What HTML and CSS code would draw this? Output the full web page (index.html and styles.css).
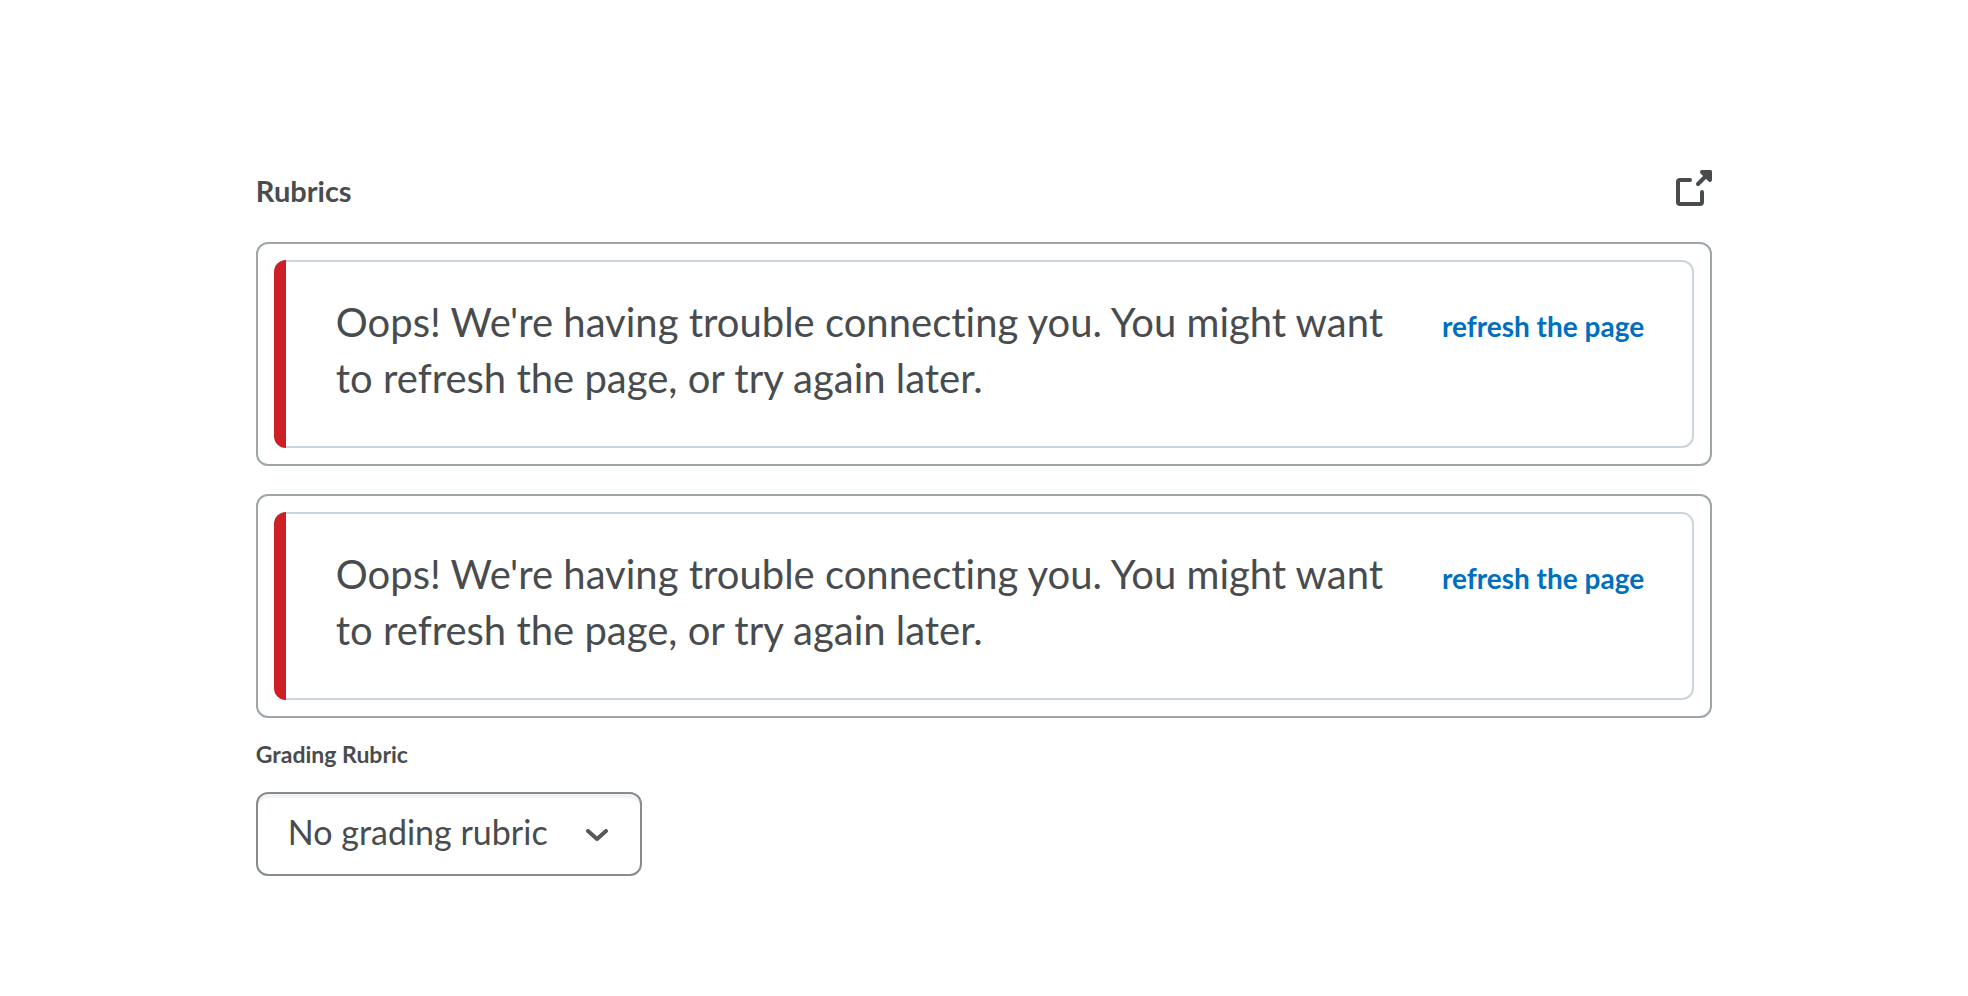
FILE: index.html
```html
<!DOCTYPE html>
<html lang="en">
<head>
<meta charset="utf-8">
<title>Rubrics</title>
<link rel="stylesheet" href="styles.css">
</head>
<body>
<main class="page">
  <header class="header">
    <h2 class="title">Rubrics</h2>
    <button class="popout" type="button" aria-label="Open in new window">
      <svg viewBox="0 0 36 36" width="36" height="36" aria-hidden="true">
        <path d="M14 10H4a2 2 0 0 0-2 2v20a2 2 0 0 0 2 2h20a2 2 0 0 0 2-2V22" fill="none" stroke="currentColor" stroke-width="4" stroke-linecap="round"/>
        <path d="M22 14l8-8" fill="none" stroke="currentColor" stroke-width="4" stroke-linecap="round"/>
        <path d="M26 0h8.500a1.500 1.500 0 0 1 1.500 1.500V10a2 2 0 0 1-3.400 1.400l-8-8A2 2 0 0 1 26 0z" fill="currentColor"/>
      </svg>
    </button>
  </header>
  <section class="rubric">
    <div class="alert" role="alert">
      <p class="message">Oops! We're having trouble connecting you. You might want to refresh the page, or try again later.</p>
      <button class="refresh" type="button">refresh the page</button>
    </div>
  </section>
  <section class="rubric">
    <div class="alert" role="alert">
      <p class="message">Oops! We're having trouble connecting you. You might want to refresh the page, or try again later.</p>
      <button class="refresh" type="button">refresh the page</button>
    </div>
  </section>
  <label class="label" for="grading">Grading Rubric</label>
  <div class="picker">
    <select class="select" id="grading">
      <option>No grading rubric</option>
    </select>
    <svg class="chevron" viewBox="0 0 22 12" width="22" height="12" aria-hidden="true">
      <path d="M2 2l9 8 9-8" fill="none" stroke="currentColor" stroke-width="4" stroke-linecap="round" stroke-linejoin="round"/>
    </svg>
  </div>
</main>
</body>
</html>
```
FILE: styles.css
```css
* {
  box-sizing: border-box;
}

body {
  margin: 0;
  background: #fff;
  color: #494c4e;
  font-family: Lato, sans-serif;
  font-variant-ligatures: none;
}

button,
select {
  font-family: inherit;
}

.page {
  padding: 170px 13% 80px;
}

.header {
  display: flex;
  justify-content: space-between;
  align-items: flex-start;
  height: 72px;
}

.title {
  margin: 3px 0 0;
  font-size: 29px;
  line-height: 36px;
  font-weight: 700;
}

.popout {
  display: flex;
  padding: 0;
  border: 0;
  background: none;
  color: inherit;
}

.rubric {
  padding: 16px;
  border: 2px solid #9ea5a9;
  border-radius: 12px;
}

.rubric + .rubric {
  margin-top: 28px;
}

.alert {
  position: relative;
  display: flex;
  align-items: flex-start;
  gap: 48px;
  padding: 32px 48px 40px 60px;
  border: 2px solid #cdd5dc;
  border-radius: 12px;
}

.alert::before {
  content: "";
  position: absolute;
  inset: -2px auto -2px -2px;
  width: 12px;
  border-radius: 12px 0 0 12px;
  background: #cd2026;
}

.message {
  flex: 1;
  margin: 0;
  font-size: 40px;
  line-height: 56px;
}

.refresh {
  margin-top: 14px;
  padding: 0;
  border: 0;
  background: none;
  color: #006fbf;
  font-size: 28px;
  line-height: 36px;
  font-weight: 700;
  white-space: nowrap;
}

.label {
  display: block;
  margin: 19px 0 21px;
  font-size: 23px;
  line-height: 34px;
  font-weight: 700;
}

.picker {
  display: inline-grid;
  align-items: center;
}

.select {
  grid-area: 1 / 1;
  height: 84px;
  padding: 0 92px 6px 30px;
  border: 2px solid #868c8f;
  border-radius: 12px;
  appearance: none;
  background: #fff;
  box-shadow: inset 0 4px 0 #f1f2f3;
  color: inherit;
  font-size: 34px;
}

.chevron {
  grid-area: 1 / 1;
  justify-self: end;
  margin: 2px 34px 0 0;
  color: #56585a;
  pointer-events: none;
}
```
